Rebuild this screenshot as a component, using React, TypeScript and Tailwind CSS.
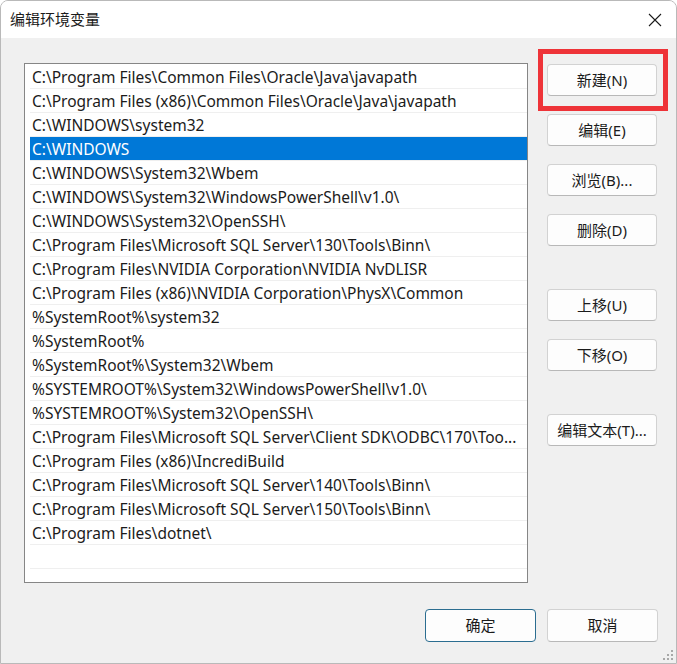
import React from "react";

const paths = [
  "C:\\Program Files\\Common Files\\Oracle\\Java\\javapath",
  "C:\\Program Files (x86)\\Common Files\\Oracle\\Java\\javapath",
  "C:\\WINDOWS\\system32",
  "C:\\WINDOWS",
  "C:\\WINDOWS\\System32\\Wbem",
  "C:\\WINDOWS\\System32\\WindowsPowerShell\\v1.0\\",
  "C:\\WINDOWS\\System32\\OpenSSH\\",
  "C:\\Program Files\\Microsoft SQL Server\\130\\Tools\\Binn\\",
  "C:\\Program Files\\NVIDIA Corporation\\NVIDIA NvDLISR",
  "C:\\Program Files (x86)\\NVIDIA Corporation\\PhysX\\Common",
  "%SystemRoot%\\system32",
  "%SystemRoot%",
  "%SystemRoot%\\System32\\Wbem",
  "%SYSTEMROOT%\\System32\\WindowsPowerShell\\v1.0\\",
  "%SYSTEMROOT%\\System32\\OpenSSH\\",
  "C:\\Program Files\\Microsoft SQL Server\\Client SDK\\ODBC\\170\\Too...",
  "C:\\Program Files (x86)\\IncrediBuild",
  "C:\\Program Files\\Microsoft SQL Server\\140\\Tools\\Binn\\",
  "C:\\Program Files\\Microsoft SQL Server\\150\\Tools\\Binn\\",
  "C:\\Program Files\\dotnet\\",
  "",
  "",
];

const font = { fontFamily: '"Noto Sans", "Noto Sans CJK SC", sans-serif' };

function Btn({ label, className = "" }: { label: string; className?: string }) {
  return (
    <div
      className={
        "relative w-[110px] h-[32px] flex items-center justify-center rounded-[4px] bg-[#fdfdfd] border border-[#d2d2d2] border-b-[#b8b8b8] text-[15px] text-[#1b1b1b] " +
        className
      }
    >
      {label}
    </div>
  );
}

export default function App() {
  return (
    <div
      className="w-[677px] h-[664px] bg-[#f0f0f0] border border-[#b9b9b9] rounded-t-[8px] overflow-hidden flex flex-col relative"
      style={font}
    >
      <div className="h-[37px] bg-white flex items-center justify-between pl-[9px] pr-[14px] shrink-0">
        <span className="text-[15px] text-[#1b1b1b]">编辑环境变量</span>
        <svg width="14" height="14" viewBox="0 0 14 14" className="mt-[1px]">
          <path d="M1 1 L13 13 M13 1 L1 13" stroke="#1b1b1b" strokeWidth="1.1" fill="none" />
        </svg>
      </div>
      <div className="flex pl-[23px] pt-[25px]">
        <div className="w-[504px] h-[520px] bg-white border border-[#868686] pl-[5px] pt-[1px] overflow-hidden shrink-0">
          {paths.map((p, i) => (
            <div
              key={i}
              className={
                "h-[24px] flex items-center pl-[2px] pt-[2px] whitespace-nowrap overflow-hidden text-[15.5px] border-b border-[#efefef] " +
                (i === 3 ? "bg-[#0078d7] text-white border-[#0078d7]" : "text-[#1b1b1b]")
              }
            >
              {p}
            </div>
          ))}
        </div>
        <div className="ml-[19px] pt-[1px] flex flex-col">
          <div className="relative">
            <Btn label="新建(N)" />
            <div className="absolute left-[-9px] top-[-15px] w-[130px] h-[62px] border-[5px] border-[#ee3338] pointer-events-none" />
          </div>
          <Btn label="编辑(E)" className="mt-[18px]" />
          <Btn label="浏览(B)..." className="mt-[18px]" />
          <Btn label="删除(D)" className="mt-[18px]" />
          <Btn label="上移(U)" className="mt-[43px]" />
          <Btn label="下移(O)" className="mt-[18px]" />
          <Btn label="编辑文本(T)..." className="mt-[43px]" />
        </div>
      </div>
      <div className="flex justify-end pr-[18px] pt-[26px] gap-[11px]">
        <div className="w-[111px] h-[33px] flex items-center justify-center rounded-[4px] bg-[#fdfdfd] border border-[#2b6d90] text-[15px] text-[#1b1b1b]">
          确定
        </div>
        <div className="w-[111px] h-[33px] flex items-center justify-center rounded-[4px] bg-[#fdfdfd] border border-[#d2d2d2] border-b-[#b8b8b8] text-[15px] text-[#1b1b1b]">
          取消
        </div>
      </div>
      <svg width="12" height="12" viewBox="0 0 12 12" className="absolute right-[2px] bottom-[2px]">
        {[
          [10, 2],
          [10, 6],
          [6, 6],
          [10, 10],
          [6, 10],
          [2, 10],
        ].map(([x, y], i) => (
          <rect key={i} x={x - 1} y={y - 1} width="2" height="2" fill="#a8a8a8" />
        ))}
      </svg>
    </div>
  );
}
